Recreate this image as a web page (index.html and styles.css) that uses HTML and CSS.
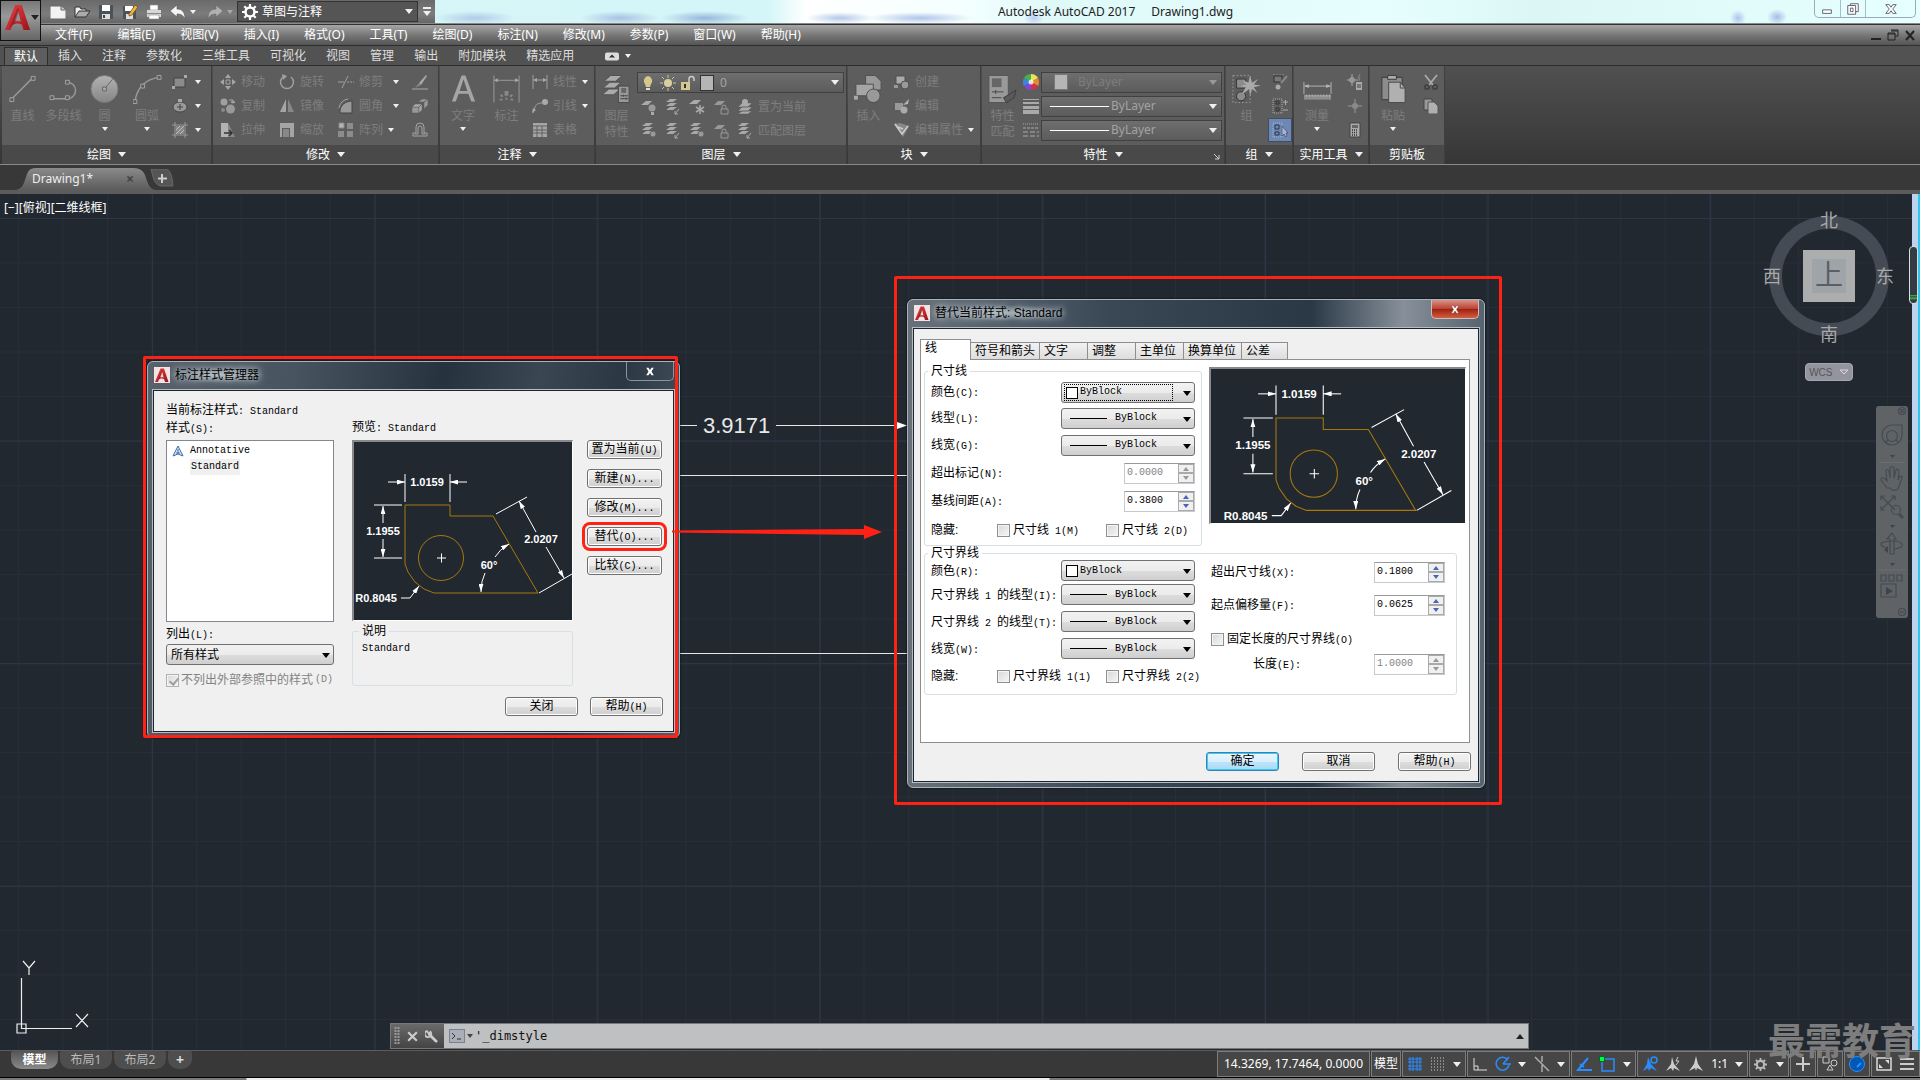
FILE: index.html
```html
<!DOCTYPE html>
<html lang="zh-CN">
<head>
<meta charset="utf-8">
<title>Autodesk AutoCAD 2017 - Drawing1.dwg</title>
<link rel="stylesheet" href="styles.css">
</head>
<body>
<svg class="defs" aria-hidden="true">
  <defs>
    <linearGradient id="red" x1="0" y1="0" x2="1" y2="1"><stop offset="0" stop-color="#e8434a"/><stop offset="1" stop-color="#9c1318"/></linearGradient>
    <linearGradient id="disc" x1="0" y1="0" x2="0" y2="1"><stop offset="0" stop-color="#b2b2b2"/><stop offset="1" stop-color="#868686"/></linearGradient>
    <linearGradient id="tabfill" x1="0" y1="0" x2="0" y2="1"><stop offset="0" stop-color="#8a8a8a"/><stop offset="1" stop-color="#5c5c5c"/></linearGradient>
    <pattern id="minor" width="44.5" height="44.5" patternUnits="userSpaceOnUse" x="18" y="24"><path d="M.5 0V44.5M0 .5H44.5" stroke="#272e39" fill="none"/></pattern>
    <pattern id="major" width="222.6" height="222.6" patternUnits="userSpaceOnUse" x="152" y="24"><path d="M.5 0V222.6M0 .5H222.6" stroke="#2e3646" fill="none"/></pattern>
    <marker id="tip" viewBox="0 0 10 6" refX="10" refY="3" markerWidth="8" markerHeight="5" orient="auto-start-reverse" markerUnits="userSpaceOnUse"><path d="M0 0L10 3L0 6z" fill="#fff"/></marker>
  </defs>
  <symbol id="i-a" viewBox="0 0 28 28"><path d="M11 0h7l9 27h-7l-2-6c-4-2-8-1-10 1l-2 5H0zM14 6l-4 12c3-1 5-1 7 0z" fill="url(#red)" fill-rule="evenodd"/><path d="M14 2L5 24l6-5 4-13" fill="#7d0f14" opacity=".45"/></symbol>
  <symbol id="i-new" viewBox="0 0 16 16"><path d="M0 2h11l5 4v9H0z" fill="#f2f2f2" stroke="#666"/><path d="M11 2v4h4" fill="#ccc" stroke="#666"/></symbol>
  <symbol id="i-open" viewBox="0 0 16 16"><path d="M1 13V3h5l1 2h5v2" fill="#eee" stroke="#333"/><path d="M1 13L5 7h11l-4 6z" fill="#aaa" stroke="#333"/></symbol>
  <symbol id="i-save" viewBox="0 0 16 16"><path d="M1 1h14v14H1z" fill="#4a525b"/><path d="M4 1h8v6H4z" fill="#fff"/><path d="M4 10h8v5H4z" fill="#ddd"/><path d="M5 11h2v3H5z" fill="#444"/></symbol>
  <symbol id="i-saveas" viewBox="0 0 16 16"><path d="M1 2h13v13H1z" fill="#4a525b"/><path d="M3 2h8v5H3z" fill="#fff"/><path d="M4 10h7v5H4z" fill="#ddd"/><path d="M7 10l6-9 3 2-6 8-3 1z" fill="#f2b53c" stroke="#6a4a14" stroke-width=".7"/></symbol>
  <symbol id="i-print" viewBox="0 0 16 16"><path d="M4 1h8v5H4z" fill="#fff" stroke="#888" stroke-width=".6"/><path d="M1 6h14v7H1z" fill="#d5d7da"/><path d="M1 9h14v1H1z" fill="#888"/><path d="M3 11h10v4H3z" fill="#fff" stroke="#888" stroke-width=".6"/></symbol>
  <symbol id="i-undo" viewBox="0 0 16 16"><path d="M0 7l7-6v4c5 0 8 3 8 10-2-4-4-5-8-5v3z" fill="#f4f4f4" stroke="#555" stroke-width=".6"/></symbol>
  <symbol id="i-gear" viewBox="0 0 16 16"><circle cx="8" cy="8" r="4.5" fill="none" stroke="currentColor" stroke-width="2.6"/><path d="M8 0v3M8 13v3M0 8h3M13 8h3M2.3 2.3l2 2M11.700 11.700l2 2M2.300 13.700l2-2M11.700 4.300l2-2" stroke="currentColor" stroke-width="2.200"/></symbol>
  <symbol id="i-line" viewBox="0 0 30 30"><path d="M4 25L25 4" stroke="#999" stroke-width="1.500"/><path d="M2 24h4v4H2zM24 2h4v4h-4z" fill="#5c5c5c" stroke="#a5a5a5"/></symbol>
  <symbol id="i-pline" viewBox="0 0 30 30"><path d="M2 25h17a8 8 0 0 0 0-17h-1" fill="none" stroke="#999" stroke-width="1.500"/><path d="M1 22h4v4H1zM17 22h4v4h-4zM17 6h4v4h-4z" fill="#5c5c5c" stroke="#a5a5a5"/></symbol>
  <symbol id="i-circle" viewBox="0 0 30 30"><circle cx="15" cy="15" r="14" fill="url(#disc)" stroke="#777"/><path d="M15 15L24 4" stroke="#666"/><path d="M13 13h4v4h-4z" fill="#aaa" stroke="#666"/></symbol>
  <symbol id="i-arc" viewBox="0 0 30 30"><path d="M2 28C4 14 13 4 28 3" fill="none" stroke="#999" stroke-width="1.500"/><path d="M0 26h4v4H0zM8 10h4v4H8zM25 1h4v4h-4z" fill="#5c5c5c" stroke="#a5a5a5"/></symbol>
  <symbol id="i-rect" viewBox="0 0 16 16"><path d="M2 4h11v9H2z" fill="#8b8b8b" stroke="#444"/><path d="M0 12h3v3H0zM12 1h3v3h-3z" fill="#aaa"/></symbol>
  <symbol id="i-ellipse" viewBox="0 0 16 16"><ellipse cx="8" cy="9" rx="7" ry="5" fill="#999" stroke="#484848"/><path d="M8 6v6M5 9h6" stroke="#444"/><path d="M6 1h4v3H6z" fill="#aaa"/></symbol>
  <symbol id="i-hatch" viewBox="0 0 16 16"><path d="M3 0v16M13 0v16M0 3h16M0 13h16" stroke="#999"/><path d="M4 4h8v8H4z" fill="#888"/><path d="M4 8l4-4M4 12l8-8M8 12l4-4" stroke="#bbb"/></symbol>
  <symbol id="i-move" viewBox="0 0 16 16"><path d="M8 0l3 4H5zM8 16l3-4H5zM0 8l4-3v6zM16 8l-4-3v6z" fill="#a5a5a5"/><path d="M6 6h4v4H6z" fill="none" stroke="#a5a5a5"/></symbol>
  <symbol id="i-rotate" viewBox="0 0 16 16"><path d="M4 3a6.500 6.500 0 1 0 8 0" fill="none" stroke="#a0a0a0" stroke-width="1.500"/><path d="M3 0l5 2-4 4z" fill="#a0a0a0"/></symbol>
  <symbol id="i-trim" viewBox="0 0 16 16"><path d="M0 8h6M9 8h2M12 8h2M15 8h1M4 14L10 2" stroke="#a0a0a0" fill="none"/></symbol>
  <symbol id="i-copy" viewBox="0 0 16 16"><circle cx="4" cy="4" r="3.500" fill="#a0a0a0"/><circle cx="10.500" cy="11" r="4.500" fill="#999"/><path d="M9 2h4v3M13 5l-2-1h4z" stroke="#aaa" fill="none"/><circle cx="3" cy="12" r="2" fill="#888"/></symbol>
  <symbol id="i-mirror" viewBox="0 0 16 16"><path d="M7 1v13H1z" fill="#a5a5a5"/><path d="M9 1v13h6z" fill="#888"/></symbol>
  <symbol id="i-fillet" viewBox="0 0 16 16"><path d="M2 15V13C2 7 8 3 14 3v12z" fill="#999" stroke="#444"/><path d="M1 10C2 5 5 2 10 1" stroke="#aaa" fill="none"/></symbol>
  <symbol id="i-stretch" viewBox="0 0 16 16"><path d="M1 1h7v14H1z" fill="#b2b2b2"/><path d="M8 1l7 14H8z" fill="#888"/><path d="M4 11h8M9 8l3 3-3 3" stroke="#333" stroke-width="1.500" fill="none"/></symbol>
  <symbol id="i-scale" viewBox="0 0 16 16"><path d="M1 1h14v14H1z" fill="#a5a5a5"/><path d="M3 6h8v9H3z" fill="#5c5c5c"/><path d="M4 7h6v8H4z" fill="#888"/></symbol>
  <symbol id="i-array" viewBox="0 0 16 16"><path d="M1 1h5v5H1z" fill="#b5b5b5" stroke="#888"/><path d="M9 1h6v6H9zM0 9h6v6H0zM9 9h6v6H9z" fill="#8c8c8c"/></symbol>
  <symbol id="i-erase" viewBox="0 0 16 16"><path d="M14 1L7 9l2 2 6-9z" fill="#a8a8a8"/><path d="M7 9l-4 5 6-3z" fill="#888"/><path d="M0 15h16" stroke="#aaa"/></symbol>
  <symbol id="i-explode" viewBox="0 0 16 16"><path d="M0 9h7v6H0z" fill="#999" stroke="#555" stroke-width=".5"/><path d="M0 9l3-3h7L7 9zM7 9l3-3v6l-3 3z" fill="#aaa" stroke="#555" stroke-width=".5"/><path d="M6 4l4-3h6l-4 3zM12 4l4-3v6l-4 4z" fill="#999" stroke="#555" stroke-width=".5"/></symbol>
  <symbol id="i-offset" viewBox="0 0 16 16"><path d="M1 14h14v-3h-3V5a4 4 0 0 0-8 0v6H1z" fill="none" stroke="#a5a5a5"/><path d="M3 12h3V6a2 2 0 0 1 4 0v6h3" fill="none" stroke="#a5a5a5"/></symbol>
  <symbol id="i-text" viewBox="0 0 30 30"><path d="M13 1h4l10 27h-4l-3-8H10l-3 8H3zM15 5l-4 12h8z" fill="#a5a5a5" fill-rule="evenodd"/></symbol>
  <symbol id="i-dim" viewBox="0 0 30 30"><path d="M2 1v28M28 1v28M3 6h24" stroke="#999"/><path d="M2 6l4-2v4zM28 6l-4-2v4z" fill="#aaa"/><path d="M14 18h2v3h-2zM9 21l2 2M21 21l-2 2M8 26h3M19 26h3M14 25h2" stroke="#888" stroke-width="2"/></symbol>
  <symbol id="i-linear" viewBox="0 0 16 16"><path d="M1 1v14M15 1v14M2 6h12" stroke="#a0a0a0"/><path d="M1 6l4-2v4zM15 6l-4-2v4z" fill="#aaa"/></symbol>
  <symbol id="i-leader" viewBox="0 0 16 16"><path d="M1 15C3 8 4 5 10 5" stroke="#a0a0a0" fill="none"/><circle cx="13" cy="4" r="3" fill="#aaa"/><path d="M0 15l1-5 3 2z" fill="#aaa"/></symbol>
  <symbol id="i-table" viewBox="0 0 16 16"><path d="M1 1h14v14H1z" fill="#a5a5a5"/><path d="M1 4h14M1 8h14M1 11h14M5 4v11M10 4v11" stroke="#606060"/></symbol>
  <symbol id="i-layerprops" viewBox="0 0 30 30"><path d="M9 1h12l-7 6H2zM8 8h12l-7 6H1zM7 15h12l-7 6H0z" fill="#aaa" stroke="#505050"/><path d="M17 12h11v17H17z" fill="#999" stroke="#4a4a4a"/><path d="M20 14h5v5h-5z" fill="#666"/><path d="M19 22h8M19 25h8M22 21v2M25 24v2" stroke="#444"/></symbol>
  <symbol id="i-bulb" viewBox="0 0 16 16"><path d="M8 1a5 5 0 0 1 3 8l-1 3H6L5 9a5 5 0 0 1 3-8z" fill="#d6c78b"/><path d="M6 13h4v2H6z" fill="#ddd"/></symbol>
  <symbol id="i-sun" viewBox="0 0 16 16"><circle cx="8" cy="8" r="4" fill="#d8cf9c"/><path d="M8 0v3M8 13v3M0 8h3M13 8h3M2 2l2 2M12 12l2 2M2 14l2-2M12 4l2-2" stroke="#c9c4ae"/></symbol>
  <symbol id="i-lock" viewBox="0 0 16 16"><path d="M1 7h9v8H1z" fill="#d4c791"/><path d="M9 7V4a2.500 2.500 0 0 1 5 0v2" fill="none" stroke="#ccc" stroke-width="1.500"/><path d="M5 9v4" stroke="#333" stroke-width="2"/></symbol>
  <symbol id="i-lay1" viewBox="0 0 16 16"><path d="M5 2h6L7 6H0z" fill="#aaa"/><circle cx="11" cy="9" r="3.500" fill="#999"/><path d="M10 13h3v3h-3z" fill="#aaa"/></symbol>
  <symbol id="i-lay2" viewBox="0 0 16 16"><path d="M5 0h7L8 3H1zM5 4h7L8 7H1zM5 8h7l-4 3H1z" fill="#a8a8a8"/><path d="M14 10l-4 5M10 12v3h3" stroke="#aaa" fill="none"/></symbol>
  <symbol id="i-lay3" viewBox="0 0 16 16"><path d="M5 1h7L8 5H0z" fill="#aaa"/><path d="M11 6v9M7 8l8 5M15 8l-8 5" stroke="#aaa" stroke-width="1.500"/></symbol>
  <symbol id="i-lay4" viewBox="0 0 16 16"><path d="M5 2h7L8 6H1z" fill="#999"/><path d="M8 10h7v5H8z" fill="none" stroke="#999"/><path d="M9 10V8a2 2 0 0 1 4 0v2" fill="none" stroke="#999"/></symbol>
  <symbol id="i-lay5" viewBox="0 0 16 16"><path d="M5 4h10l-4 4H1zM5 8h10l-4 4H1zM5 12h10l-4 3H1z" fill="#aaa" stroke="#555" stroke-width=".5"/><circle cx="8" cy="3" r="3" fill="#aaa"/></symbol>
  <symbol id="i-lay6" viewBox="0 0 16 16"><path d="M5 0h7L8 3H1zM5 4h7L8 7H1zM5 8h7l-4 3H1z" fill="#a8a8a8"/><circle cx="12" cy="11" r="3" fill="#999" stroke="#666"/></symbol>
  <symbol id="i-insert" viewBox="0 0 30 30"><path d="M12 1h10l6 6v9H12z" fill="#999" stroke="#4f4f4f"/><path d="M2 10h18v12H2z" fill="#a5a5a5" stroke="#4f4f4f"/><circle cx="20" cy="22" r="7" fill="#999" stroke="#4f4f4f"/><path d="M0 22h4v4H0z" fill="#aaa"/></symbol>
  <symbol id="i-block" viewBox="0 0 16 16"><path d="M2 2h9v8H2z" fill="#aaa" stroke="#505050"/><circle cx="11" cy="11" r="4" fill="#999" stroke="#505050"/><path d="M0 11h4v3H0z" fill="#999"/></symbol>
  <symbol id="i-bedit" viewBox="0 0 16 16"><path d="M1 5h8v7H1z" fill="#999"/><circle cx="10" cy="12" r="3.500" fill="#aaa"/><path d="M9 7l6-6-1 5z" fill="#b5b5b5"/></symbol>
  <symbol id="i-attr" viewBox="0 0 16 16"><path d="M0 2l6-1 9 3-6 11z" fill="#888"/><path d="M1 2l7 10 6-8M4 5l5 2" stroke="#ccc" fill="none" stroke-width="1.500"/></symbol>
  <symbol id="i-match" viewBox="0 0 30 30"><path d="M1 1h20v28H1z" fill="#999" stroke="#555"/><path d="M4 4h10v9H4z" fill="#666"/><path d="M4 18h12M4 24h10M8 16v4" stroke="#444"/><path d="M29 16l-6 4-7 4 3 5 8-5z" fill="#5a5a5a" stroke="#3d3d3d"/></symbol>
  <symbol id="i-wheel" viewBox="0 0 16 16"><path d="M8 8L8 0A8 8 0 0 1 15 4z" fill="#e9e35a"/><path d="M8 8L15 4A8 8 0 0 1 15 12z" fill="#e8872d"/><path d="M8 8L15 12A8 8 0 0 1 8 16z" fill="#d4304a"/><path d="M8 8L8 16A8 8 0 0 1 1 12z" fill="#7d4ad0"/><path d="M8 8L1 12A8 8 0 0 1 1 4z" fill="#3b86d8"/><path d="M8 8L1 4A8 8 0 0 1 8 0z" fill="#49b04e"/><circle cx="8" cy="8" r="2.500" fill="#fff" opacity=".8"/></symbol>
  <symbol id="i-lweight" viewBox="0 0 16 16"><path d="M0 1.500h16" stroke="#aaa"/><path d="M0 5h16" stroke="#aaa" stroke-width="2"/><path d="M0 9.500h16" stroke="#aaa" stroke-width="3"/><path d="M0 14h16" stroke="#aaa" stroke-width="4"/></symbol>
  <symbol id="i-ltype" viewBox="0 0 16 16"><path d="M0 2h16" stroke="#aaa" stroke-dasharray="1 1"/><path d="M0 6h16" stroke="#aaa" stroke-dasharray="3 1"/><path d="M0 10h16M0 14h16" stroke="#aaa" stroke-dasharray="5 2"/></symbol>
  <symbol id="i-group" viewBox="0 0 32 32"><path d="M1 1h19v30H1z" fill="none" stroke="#999" stroke-dasharray="2 2"/><path d="M5 5h10v10H5z" fill="#8c8c8c" stroke="#333"/><circle cx="10" cy="24" r="5" fill="#8c8c8c" stroke="#333"/><path d="M20 1l2 8 7-4-5 6 8 1-8 2 4 6-6-4-2 8-1-8-8 6 4-8-6-1 6-2-3-5 6 3z" fill="#aaa"/></symbol>
  <symbol id="i-ungroup" viewBox="0 0 16 16"><path d="M2 2h8v6H2z" fill="#777" stroke="#333"/><circle cx="6" cy="13" r="2.500" fill="#aaa"/><path d="M1 0h12" stroke="#999" stroke-dasharray="2 1"/><path d="M9 9l6-7" stroke="#888" stroke-width="2"/></symbol>
  <symbol id="i-gedit" viewBox="0 0 16 16"><path d="M1 1h9v14H1z" fill="none" stroke="#aaa" stroke-dasharray="1 1"/><path d="M4 3h3v3H4zM4 10h3v3H4z" fill="none" stroke="#333"/><path d="M11 4h5M13.500 2v5M11 12h5" stroke="#aaa"/></symbol>
  <symbol id="i-gsel" viewBox="0 0 16 16"><path d="M1 1h9v14H1z" fill="none" stroke="#a8b6cf" stroke-dasharray="1 1"/><path d="M3 3h4v4H3zM3 10h4v3H3z" fill="none" stroke="#2b3650"/><path d="M10 4v10l2-2 2 3 1-1-1-3h2z" fill="#a8b6cf" stroke="#34415e" stroke-width=".6"/></symbol>
  <symbol id="i-measure" viewBox="0 0 30 30"><path d="M1 8v12M29 8v12M2 12h26" stroke="#b5b5b5"/><path d="M1 12l5-2v4zM29 12l-5-2v4z" fill="#b5b5b5"/><path d="M1 21h28v5H1z" fill="#8d8d8d"/><path d="M3 22h25" stroke="#bbb" stroke-dasharray="1 2" stroke-width="2"/></symbol>
  <symbol id="i-quick" viewBox="0 0 16 16"><path d="M5 0v12M0 6h11M3 4h4v4H3z" stroke="#aaa" fill="none"/><path d="M9 8h6v8H9z" fill="#aaa"/><path d="M10 11h4M10 13h4" stroke="#444"/><path d="M13 0l-2 4h2l-1 3" stroke="#888" fill="none"/></symbol>
  <symbol id="i-point" viewBox="0 0 16 16"><path d="M8 1v14M1 8h14M6 6h4v4H6z" stroke="#999" fill="none"/></symbol>
  <symbol id="i-calc" viewBox="0 0 16 16"><path d="M3 1h10v14H3z" fill="#aaa" stroke="#444"/><path d="M5 3h6v3H5z" fill="#666"/><path d="M5 8h6M5 10.500h6M5 13h6" stroke="#333" stroke-dasharray="1 1" stroke-width="1.500"/></symbol>
  <symbol id="i-paste" viewBox="0 0 30 30"><path d="M3 3h21v23H3z" fill="#8c8c8c" stroke="#3a3a3a"/><path d="M9 1h9v4H9z" fill="#aaa" stroke="#3a3a3a"/><path d="M10 8h12l5 6v15H10z" fill="#b0b0b0" stroke="#4a4a4a"/><path d="M22 8v6h5" fill="none" stroke="#4a4a4a"/></symbol>
  <symbol id="i-cut" viewBox="0 0 16 16"><path d="M2 1l8 10M14 1L6 11" stroke="#aaa" stroke-width="1.800"/><circle cx="4" cy="13" r="2.200" fill="none" stroke="#3c3c3c" stroke-width="1.300"/><circle cx="12" cy="13" r="2.200" fill="none" stroke="#3c3c3c" stroke-width="1.300"/></symbol>
  <symbol id="i-copyclip" viewBox="0 0 16 16"><path d="M1 1h8v11H1z" fill="#999" stroke="#444"/><path d="M5 4h6l4 4v8H5z" fill="#b0b0b0" stroke="#555"/></symbol>
</svg>

<header class="titlebar">
  <div class="quick">
    <button class="ico" title="新建"><svg><use href="#i-new"/></svg></button>
    <button class="ico" title="打开"><svg><use href="#i-open"/></svg></button>
    <button class="ico" title="保存"><svg><use href="#i-save"/></svg></button>
    <button class="ico" title="另存为"><svg><use href="#i-saveas"/></svg></button>
    <button class="ico" title="打印"><svg><use href="#i-print"/></svg></button>
    <button class="ico" title="放弃"><svg><use href="#i-undo"/></svg></button>
    <i class="caret tiny"></i>
    <button class="ico redo" title="重做"><svg><use href="#i-undo"/></svg></button>
    <i class="caret tiny dim"></i>
    <div class="workspace">
      <svg><use href="#i-gear"/></svg>
      <select aria-label="工作空间"><option>草图与注释</option></select>
      <i class="caret"></i>
    </div>
    <button class="more" title="自定义"><i class="caret"></i></button>
  </div>
  <div class="caption"><span>Autodesk AutoCAD 2017</span><span>Drawing1.dwg</span></div>
  <div class="winctl">
    <button title="最小化"><svg viewBox="0 0 16 16"><path d="M3 9h10v4H3z" fill="#fff" stroke="#556"/></svg></button>
    <button title="还原"><svg viewBox="0 0 16 16"><path d="M5 2h9v9H5z" fill="#fff" stroke="#556"/><path d="M2 4h9v10H2z" fill="#fff" stroke="#556"/><path d="M5 7h3v4H5z" fill="#fff" stroke="#556"/></svg></button>
    <button title="关闭"><svg viewBox="0 0 16 16"><path d="M2 3h4l2 3 2-3h4l-4 5 4 5h-4l-2-3-2 3H2l4-5z" fill="#fff" stroke="#556"/></svg></button>
  </div>
</header>
<button class="appmenu" title="应用程序菜单"><svg class="big"><use href="#i-a"/></svg><i class="caret"></i></button>

<nav class="menubar">
  <a href="#">文件(F)</a><a href="#">编辑(E)</a><a href="#">视图(V)</a><a href="#">插入(I)</a><a href="#">格式(O)</a><a href="#">工具(T)</a><a href="#">绘图(D)</a><a href="#">标注(N)</a><a href="#">修改(M)</a><a href="#">参数(P)</a><a href="#">窗口(W)</a><a href="#">帮助(H)</a>
  <div class="docctl">
    <button title="最小化"><svg viewBox="0 0 12 12"><path d="M1 9h10v2H1z" fill="#222"/></svg></button>
    <button title="还原"><svg viewBox="0 0 12 12"><path d="M4 1h7v6H8M1 4h7v7H1zM1 5h7M4 2h7" fill="none" stroke="#222"/></svg></button>
    <button title="关闭"><svg viewBox="0 0 12 12"><path d="M2 2l8 9M10 2l-8 9" stroke="#222" stroke-width="2"/></svg></button>
  </div>
</nav>

<nav class="tabs">
  <a class="on" href="#">默认</a><a href="#">插入</a><a href="#">注释</a><a href="#">参数化</a><a href="#">三维工具</a><a href="#">可视化</a><a href="#">视图</a><a href="#">管理</a><a href="#">输出</a><a href="#">附加模块</a><a href="#">精选应用</a>
  <button class="pill" title="最小化功能区"><svg viewBox="0 0 14 8"><rect width="14" height="8" rx="2" fill="#ddd"/><path d="M4 5h6L7 2z" fill="#333"/></svg></button><i class="caret tiny"></i>
</nav>

<section class="ribbon">
  <div class="panel p-draw">
    <div class="body">
      <button class="bigbtn w41"><svg><use href="#i-line"/></svg>直线</button>
      <button class="bigbtn w41"><svg><use href="#i-pline"/></svg>多段线</button>
      <button class="bigbtn w41"><svg><use href="#i-circle"/></svg>圆<i class="caret tiny"></i></button>
      <button class="bigbtn w44"><svg><use href="#i-arc"/></svg>圆弧<i class="caret tiny"></i></button>
      <div class="col">
        <button class="row"><svg><use href="#i-rect"/></svg><i class="caret tiny"></i></button>
        <button class="row"><svg><use href="#i-ellipse"/></svg><i class="caret tiny"></i></button>
        <button class="row"><svg><use href="#i-hatch"/></svg><i class="caret tiny"></i></button>
      </div>
    </div>
    <h2>绘图<i class="caret"></i></h2>
  </div>
  <div class="panel p-modify">
    <div class="body">
      <div class="col w60">
        <button class="row"><svg><use href="#i-move"/></svg>移动</button>
        <button class="row"><svg><use href="#i-copy"/></svg>复制</button>
        <button class="row"><svg><use href="#i-stretch"/></svg>拉伸</button>
      </div>
      <div class="col w60">
        <button class="row"><svg><use href="#i-rotate"/></svg>旋转</button>
        <button class="row"><svg><use href="#i-mirror"/></svg>镜像</button>
        <button class="row"><svg><use href="#i-scale"/></svg>缩放</button>
      </div>
      <div class="col w73">
        <button class="row"><svg><use href="#i-trim"/></svg>修剪<i class="caret tiny far"></i></button>
        <button class="row"><svg><use href="#i-fillet"/></svg>圆角<i class="caret tiny far"></i></button>
        <button class="row"><svg><use href="#i-array"/></svg>阵列<i class="caret tiny"></i></button>
      </div>
      <div class="col">
        <button class="row"><svg><use href="#i-erase"/></svg></button>
        <button class="row"><svg><use href="#i-explode"/></svg></button>
        <button class="row"><svg><use href="#i-offset"/></svg></button>
      </div>
    </div>
    <h2>修改<i class="caret"></i></h2>
  </div>
  <div class="panel p-anno">
    <div class="body">
      <button class="bigbtn w46"><svg><use href="#i-text"/></svg>文字<i class="caret tiny"></i></button>
      <button class="bigbtn w41"><svg><use href="#i-dim"/></svg>标注</button>
      <div class="col tight">
        <button class="row"><svg><use href="#i-linear"/></svg>线性<i class="caret tiny"></i></button>
        <button class="row"><svg><use href="#i-leader"/></svg>引线<i class="caret tiny"></i></button>
        <button class="row"><svg><use href="#i-table"/></svg>表格</button>
      </div>
    </div>
    <h2>注释<i class="caret"></i></h2>
  </div>
  <div class="panel p-layer">
    <div class="body">
      <button class="bigbtn w41"><svg><use href="#i-layerprops"/></svg>图层<br>特性</button>
      <div class="stack">
        <div class="combo layer">
          <svg><use href="#i-bulb"/></svg><svg><use href="#i-sun"/></svg><svg><use href="#i-lock"/></svg><span class="swatch"></span>
          <select aria-label="图层"><option>0</option></select><i class="caret"></i>
        </div>
        <div class="icons">
          <svg><use href="#i-lay1"/></svg><svg><use href="#i-lay2"/></svg><svg><use href="#i-lay3"/></svg><svg><use href="#i-lay4"/></svg>
          <button class="row"><svg><use href="#i-lay5"/></svg>置为当前</button>
        </div>
        <div class="icons">
          <svg><use href="#i-lay6"/></svg><svg><use href="#i-lay2"/></svg><svg><use href="#i-lay6"/></svg><svg><use href="#i-lay4"/></svg>
          <button class="row"><svg><use href="#i-lay2"/></svg>匹配图层</button>
        </div>
      </div>
    </div>
    <h2>图层<i class="caret"></i></h2>
  </div>
  <div class="panel p-block">
    <div class="body">
      <button class="bigbtn w41"><svg><use href="#i-insert"/></svg>插入</button>
      <div class="col tight">
        <button class="row"><svg><use href="#i-block"/></svg>创建</button>
        <button class="row"><svg><use href="#i-bedit"/></svg>编辑</button>
        <button class="row"><svg><use href="#i-attr"/></svg>编辑属性<i class="caret tiny"></i></button>
      </div>
    </div>
    <h2>块<i class="caret"></i></h2>
  </div>
  <div class="panel p-props">
    <div class="body">
      <button class="bigbtn w41"><svg><use href="#i-match"/></svg>特性<br>匹配</button>
      <div class="stack">
        <div class="prop"><svg><use href="#i-wheel"/></svg><div class="combo faint"><span class="swatch"></span><select aria-label="对象颜色"><option>ByLayer</option></select><i class="caret"></i></div></div>
        <div class="prop"><svg><use href="#i-lweight"/></svg><div class="combo"><span class="rule"></span><select aria-label="线宽"><option>ByLayer</option></select><i class="caret"></i></div></div>
        <div class="prop"><svg><use href="#i-ltype"/></svg><div class="combo"><span class="rule"></span><select aria-label="线型"><option>ByLayer</option></select><i class="caret"></i></div></div>
      </div>
    </div>
    <h2>特性<i class="caret"></i></h2>
    <svg class="launch" viewBox="0 0 8 8"><path d="M1 1l5 5M6 2v4H2" stroke="#ccc" fill="none"/></svg>
  </div>
  <div class="panel p-group">
    <div class="body">
      <button class="bigbtn w41"><svg><use href="#i-group"/></svg>组</button>
      <div class="col tight">
        <button class="row"><svg><use href="#i-ungroup"/></svg></button>
        <button class="row"><svg><use href="#i-gedit"/></svg></button>
        <button class="row lit"><svg><use href="#i-gsel"/></svg></button>
      </div>
    </div>
    <h2>组<i class="caret"></i></h2>
  </div>
  <div class="panel p-util">
    <div class="body">
      <button class="bigbtn w46"><svg><use href="#i-measure"/></svg>测量<i class="caret tiny"></i></button>
      <div class="col">
        <button class="row"><svg><use href="#i-quick"/></svg></button>
        <button class="row"><svg><use href="#i-point"/></svg></button>
        <button class="row"><svg><use href="#i-calc"/></svg></button>
      </div>
    </div>
    <h2>实用工具<i class="caret"></i></h2>
  </div>
  <div class="panel p-util">
    <div class="body">
      <button class="bigbtn w46"><svg><use href="#i-paste"/></svg>粘贴<i class="caret tiny"></i></button>
      <div class="col">
        <button class="row"><svg><use href="#i-cut"/></svg></button>
        <button class="row"><svg><use href="#i-copyclip"/></svg></button>
      </div>
    </div>
    <h2>剪贴板</h2>
  </div>
</section>

<nav class="files">
  <a class="file" href="#"><svg class="shape" viewBox="0 0 140 22" preserveAspectRatio="none"><path d="M0 22C8 20 8 14 11 6Q13 0 19 0H118Q126 0 129 7C132 16 133 21 140 22z" fill="url(#tabfill)"/></svg><span>Drawing1*</span><b>×</b></a>
  <button class="add" title="新图形"><svg viewBox="0 0 24 18"><path d="M1 0H16Q22 1 23 17H11Q5 16 3 8z" fill="#555" stroke="#666"/><path d="M12 5v9M8 9.500h9" stroke="#ccc" stroke-width="2"/></svg></button>
</nav>

<main class="work">
  <div class="canvas">
    <svg class="grid"><rect width="100%" height="100%" fill="url(#minor)"/><rect width="100%" height="100%" fill="url(#major)"/></svg>
    <div class="view">[−][俯视][二维线框]</div>
    <svg class="dims" width="920" height="480">
      <g stroke="#e6e6e6" fill="none"><path d="M678 231.500H697M776 231.500H900M678 281.500H910M678 459.500H910"/></g>
      <path d="M897 228v7l10-3.500z" fill="#fff"/>
      <text x="703" y="239" font-size="22" fill="#e8e8e8">3.9171</text>
    </svg>
    <svg class="ucs" width="90" height="90" viewBox="0 0 90 90"><path d="M9.500 24V74.500H60M5 70h9v9H5zM11 7l6 7 6-7M17 14v7M64 60l12 13M76 60L64 73" fill="none" stroke="#eee" stroke-width="1.200"/></svg>

    <div class="compass">
      <span class="n">北</span><span class="w">西</span><button class="top">上</button><span class="e">东</span><span class="s">南</span>
    </div>
    <button class="wcs">WCS<svg viewBox="0 0 10 6"><path d="M1 1h8L5 5z" fill="none" stroke="#d8d8e0"/></svg></button>
    <svg class="navbar" viewBox="0 0 32 212">
      <rect width="32" height="212" rx="3" fill="#5f6366"/>
      <g fill="none" stroke="#454b54" stroke-width="1.200">
        <circle cx="26" cy="5" r="3.500"/><path d="M24 3l4 4M28 3l-4 4"/>
        <path d="M16 19h10v11a10 10 0 1 1-10-11z"/><circle cx="16" cy="30" r="5.500"/><path d="M9 37l3-3M23 37l-3-3"/>
        <path d="M3 56.500h26M3 164h26" stroke="#6a6e72"/>
        <path d="M11 82L5 74q0-3 3-2l3 3-1-10q1-3 3 0l1 7V62q2-3 4 0v10l2-8q2-2 3 1l-1 9 2-4q3 0 2 2l-4 11q-5 3-8-1z"/>
        <path d="M5 90l14 14M19 90L5 104M5 94v-4h4M15 90h4v4M5 100v4h4"/><circle cx="20" cy="104" r="4.500"/><path d="M23 108l4 4" stroke-width="3"/>
        <path d="M14 148v-15h-3l5-6 4 6h-2v15z"/><path d="M10 142c-12-5 0-7 6-7 13 0 14 7 2 8"/>
        <path d="M5 169h5v6H5zM13 169h5v6h-5zM21 169h5v6h-5zM5 178h15v13H5z"/><circle cx="26" cy="206" r="3.500"/><path d="M24 206h4"/>
      </g>
      <path d="M14 49h5l-2.500 3zM14 119h5l-2.500 3zM14 157h5l-2.500 3zM10 181l7 4-7 4zM8 144l4-4v7z" fill="#3f444c"/>
    </svg>

    <div class="mark mark-a"></div>
    <div class="mark mark-b"></div>

    <section class="dialog manager" aria-label="标注样式管理器">
      <div class="bar"><span class="appicon"><svg><use href="#i-a"/></svg></span><span class="glow">标注样式管理器</span><button class="close" title="关闭"><svg viewBox="0 0 12 12"><path d="M1 1h3l2 3 2-3h3L8 6l3 5H8L6 8l-2 3H1l3-5z" fill="#fff"/></svg></button></div>
      <form class="client">
        <div class="mgr">
          <div class="left">
            <p class="cur">当前标注样式<span class="en">: Standard</span></p>
            <p class="ln">样式<span class="en">(S):</span></p>
            <ul class="styles">
              <li><svg viewBox="0 0 12 12"><path d="M6 1L1 11l5-2 5 2zM6 4v5M4 8h4" fill="#dce9f7" stroke="#3b6ea8"/></svg><span class="en">Annotative</span></li>
              <li><svg></svg><span class="en sel">Standard</span></li>
            </ul>
            <label class="ln list" for="list">列出<span class="en">(L):</span></label>
            <div class="dd"><select id="list"><option>所有样式</option></select></div>
            <label class="ck off"><input type="checkbox" checked disabled>不列出外部参照中的样式<span class="en">(D)</span></label>
          </div>
          <div class="mid">
            <p class="ln">预览<span class="en">: Standard</span></p>
            <svg class="preview pv-a" viewBox="0 0 218 178">
              <g transform="translate(51 63)"><g id="part">
                <path d="M0 0H45V11H88L133 88H29L19 84L10 77L3 67L0 59Z" fill="none" stroke="#a8790a"/><circle cx="36" cy="53" r="22.500" fill="none" stroke="#a8790a"/>
                <g fill="none" stroke="#fff"><path d="M0-31V-3M45-31V-3M-31 0H-3M-31 53H-3M91 9L122-8M134 88L167 69M32 53h9M36.500 48.500v9"/>
                <path d="M-17-23H0" marker-end="url(#tip)"/><path d="M62-23H45" marker-end="url(#tip)"/>
                <path d="M-22 18V1" marker-end="url(#tip)"/><path d="M-22 34V52" marker-end="url(#tip)"/>
                <path d="M131 27L114-4" marker-end="url(#tip)"/><path d="M141 42L159 73" marker-end="url(#tip)"/>
                <path d="M90 52Q94 45 104 39" marker-end="url(#tip)"/><path d="M80 68Q76 76 76 87" marker-end="url(#tip)"/>
                <path d="M-4 93H5L14 81" marker-end="url(#tip)"/></g>
                <g class="dimtext"><text x="22" y="-19">1.0159</text><text x="-22" y="30">1.1955</text><text x="136" y="38">2.0207</text><text x="84" y="64">60°</text><text x="-29" y="97">R0.8045</text></g>
              </g></g>
            </svg>
            <fieldset class="desc"><legend>说明</legend><span class="en">Standard</span></fieldset>
          </div>
          <div class="btns">
            <button type="button">置为当前<span class="en">(U)</span></button>
            <button type="button">新建<span class="en">(N)...</span></button>
            <button type="button">修改<span class="en">(M)...</span></button>
            <button type="button" class="ring">替代<span class="en">(O)...</span></button>
            <button type="button">比较<span class="en">(C)...</span></button>
          </div>
        </div>
        <div class="foot"><button type="button">关闭</button><button type="button">帮助<span class="en">(H)</span></button></div>
      </form>
    </section>

    <svg class="arrow" width="220" height="20" viewBox="0 0 220 20"><path d="M0 8.500L192 7V3L210 10L192 17V13L0 10.500z" fill="#ff2214"/></svg>

    <section class="dialog override" aria-label="替代当前样式">
      <div class="bar"><span class="appicon"><svg><use href="#i-a"/></svg></span><span class="glow">替代当前样式: Standard</span><button class="close hot" title="关闭"><svg viewBox="0 0 12 12"><path d="M1 1h3l2 3 2-3h3L8 6l3 5H8L6 8l-2 3H1l3-5z" fill="#fff" stroke="#533" stroke-width=".5"/></svg></button></div>
      <form class="client">
        <div class="ptabs" role="tablist"><button type="button" role="tab" class="on t51">线</button><button type="button" role="tab" class="t69">符号和箭头</button><button type="button" role="tab" class="t48">文字</button><button type="button" role="tab" class="t48">调整</button><button type="button" role="tab" class="t48">主单位</button><button type="button" role="tab" class="t58">换算单位</button><button type="button" role="tab" class="t46">公差</button></div>
        <div class="page">
          <div class="upper">
            <fieldset class="grp dimline"><legend>尺寸线</legend>
              <div class="rows r1">
                <label for="c1">颜色<span class="en">(C):</span></label><div class="dd color focus"><select id="c1" class="en"><option>ByBlock</option></select></div>
                <label for="l1">线型<span class="en">(L):</span></label><div class="dd line"><select id="l1" class="en"><option>ByBlock</option></select></div>
                <label for="w1">线宽<span class="en">(G):</span></label><div class="dd line"><select id="w1" class="en"><option>ByBlock</option></select></div>
                <label for="s1">超出标记<span class="en">(N):</span></label><div class="spin off"><input id="s1" class="en" value="0.0000" disabled><div><button type="button" disabled title="增加"></button><button type="button" disabled title="减少"></button></div></div>
                <label for="s2">基线间距<span class="en">(A):</span></label><div class="spin"><input id="s2" class="en" value="0.3800"><div><button type="button" title="增加"></button><button type="button" title="减少"></button></div></div>
                <div class="hide"><span>隐藏:</span><label class="ck"><input type="checkbox"><span>尺寸线<span class="en"> 1(M)</span></span></label><label class="ck"><input type="checkbox"><span>尺寸线<span class="en"> 2(D)</span></span></label></div>
              </div>
            </fieldset>
            <svg class="preview pv-b" viewBox="0 0 254 154"><use href="#part" transform="translate(65 49) scale(1.050)"/></svg>
          </div>
          <fieldset class="grp ext"><legend>尺寸界线</legend>
            <div class="two">
              <div class="rows r2">
                <label for="c2">颜色<span class="en">(R):</span></label><div class="dd color"><select id="c2" class="en"><option>ByBlock</option></select></div>
                <label for="l2">尺寸界线<span class="en"> 1 </span>的线型<span class="en">(I):</span></label><div class="dd line"><select id="l2" class="en"><option>ByBlock</option></select></div>
                <label for="l3">尺寸界线<span class="en"> 2 </span>的线型<span class="en">(T):</span></label><div class="dd line"><select id="l3" class="en"><option>ByBlock</option></select></div>
                <label for="w2">线宽<span class="en">(W):</span></label><div class="dd line"><select id="w2" class="en"><option>ByBlock</option></select></div>
                <div class="hide"><span>隐藏:</span><label class="ck"><input type="checkbox"><span>尺寸界线<span class="en"> 1(1)</span></span></label><label class="ck"><input type="checkbox"><span>尺寸界线<span class="en"> 2(2)</span></span></label></div>
              </div>
              <div class="rows r3">
                <label for="s3">超出尺寸线<span class="en">(X):</span></label><div class="spin"><input id="s3" class="en" value="0.1800"><div><button type="button" title="增加"></button><button type="button" title="减少"></button></div></div>
                <label for="s4">起点偏移量<span class="en">(F):</span></label><div class="spin"><input id="s4" class="en" value="0.0625"><div><button type="button" title="增加"></button><button type="button" title="减少"></button></div></div>
                <label class="ck wide"><input type="checkbox"><span>固定长度的尺寸界线<span class="en">(O)</span></span></label>
                <label class="indent" for="s5">长度<span class="en">(E):</span></label><div class="spin off"><input id="s5" class="en" value="1.0000" disabled><div><button type="button" disabled title="增加"></button><button type="button" disabled title="减少"></button></div></div>
              </div>
            </div>
          </fieldset>
        </div>
        <div class="foot"><button type="button" class="ok">确定</button><button type="button">取消</button><button type="button">帮助<span class="en">(H)</span></button></div>
      </form>
    </section>

    <div class="cmd">
      <div class="handle"><svg class="grip" viewBox="0 0 6 18"><path d="M1.500 0v18M4.500 0v18" stroke="#999" stroke-width="2" stroke-dasharray="2 1"/></svg>
        <button title="关闭"><svg viewBox="0 0 12 12"><path d="M2 2l8 8M10 2l-8 8" stroke="#ccc" stroke-width="2"/></svg></button>
        <button title="自定义"><svg viewBox="0 0 14 14"><path d="M5 5l7 7" stroke="#ccc" stroke-width="3" stroke-linecap="round"/><path d="M2 1a3.500 3.500 0 1 0 4 1L4 4z" fill="none" stroke="#ccc" stroke-width="1.800"/></svg></button></div>
      <svg class="prompt" viewBox="0 0 16 14"><rect x=".5" y=".5" width="15" height="13" fill="#a9aeb8" stroke="#7a8290"/><path d="M3 4l3 3-3 3M8 10h4" stroke="#333" fill="none"/></svg><i class="caret tiny dark"></i>
      <input aria-label="命令" value="'_dimstyle"><i class="caret dark up"></i>
    </div>
  </div>
  <div class="edge"><span></span></div>
</main>

<footer class="status">
  <nav class="layouts"><a class="on" href="#">模型</a><a href="#">布局1</a><a href="#">布局2</a><a class="plus" href="#">+</a></nav>
  <div class="cells">
    <output class="cell coord">14.3269, 17.7464, 0.0000</output>
    <button class="cell model">模型</button>
    <div class="cell c64">
      <svg viewBox="0 0 16 16"><path d="M3 1v14M6 1v14M10 1v14M13 1v14M1 3h14M1 6h14M1 10h14M1 13h14" stroke="#2a8cff"/></svg>
      <svg viewBox="0 0 16 16"><path d="M1 2h15M1 5h15M1 8h15M1 11h15M1 14h15" stroke="#ccc" stroke-dasharray="1 2"/></svg><i class="caret"></i></div>
    <div class="cell c103">
      <svg viewBox="0 0 16 16"><path d="M2 2v12h13M2 10h4v4" fill="none" stroke="#ddd"/></svg>
      <svg viewBox="0 0 16 16"><path d="M13 4a6.500 6.500 0 1 0 1 5M8 8h8M8 8l6-7" fill="none" stroke="#2a8cff" stroke-width="1.500"/></svg><i class="caret"></i>
      <svg viewBox="0 0 16 16"><path d="M1 1l14 14M8 0v6M8 9v7" stroke="#aaa" stroke-width="1.500"/></svg><i class="caret"></i></div>
    <div class="cell c65">
      <svg viewBox="0 0 16 16"><path d="M12 2L2 14h14M4 8l4 3" fill="none" stroke="#2a8cff" stroke-width="2"/></svg>
      <svg viewBox="0 0 16 16"><path d="M3 3h12v12H3z" fill="none" stroke="#2a8cff" stroke-width="1.500"/><path d="M0 0h6v6H0z" fill="#063"/><path d="M1 1h4v4H1z" fill="#0f3"/></svg><i class="caret"></i></div>
    <div class="cell c111">
      <svg viewBox="0 0 16 16"><path d="M6 1l3 7 6 7-6-3-2 3-1-3-5 3 4-7z" fill="#2a8cff"/><circle cx="12" cy="4" r="3" fill="none" stroke="#2a8cff" stroke-width="1.500"/></svg>
      <svg viewBox="0 0 16 16"><path d="M7 1l2 7 6 7-6-3-1 3-2-3-5 3 5-7z" fill="#ccc"/><path d="M13 1l-2 4h3l-3 4" fill="none" stroke="#ccc"/></svg>
      <svg viewBox="0 0 16 16"><path d="M8 0l2 8 5 7-6-3-1 3-1-3-6 3 5-7z" fill="#ccc"/></svg>
      <span>1:1</span><i class="caret"></i></div>
    <div class="cell c40"><svg class="small"><use href="#i-gear"/></svg><i class="caret"></i></div>
    <div class="cell c26"><svg viewBox="0 0 16 16"><path d="M8 1v14M1 8h14" stroke="#ccc" stroke-width="2"/></svg></div>
    <div class="cell c26"><svg viewBox="0 0 16 16"><path d="M1 1h6v6H1zM5 14l3-5 3 5z" fill="none" stroke="#ccc"/><circle cx="12" cy="7" r="3" fill="none" stroke="#ccc"/></svg></div>
    <div class="cell c26"><svg viewBox="0 0 16 16"><circle cx="8" cy="8" r="7.500" fill="#0059b3" stroke="#2a8cff"/><path d="M8 11l4-4" stroke="#2a8cff" stroke-width="2"/></svg></div>
    <div class="cell c49"><svg viewBox="0 0 16 16"><path d="M1 2h14v12H1z" fill="none" stroke="#ddd" stroke-width="1.500"/><path d="M9 4h4v4zM3 8v4h4z" fill="#ddd"/></svg><svg viewBox="0 0 16 16"><path d="M1 3h14M1 8h14M1 13h14" stroke="#ccc" stroke-width="2"/></svg></div>
  </div>
</footer>
<div class="taskedge"></div>
<div class="watermark">最需教育</div>
</body>
</html>
```
FILE: styles.css
```css
* { box-sizing: border-box; }
html, body { height: 100%; }
body {
  margin: 0; display: flex; flex-direction: column; position: relative; overflow: hidden;
  background: #383838; color: #fff; font: 12px/16px "Noto Sans", "Noto Sans CJK SC", sans-serif;
}
button, input, select { font: inherit; color: inherit; margin: 0; padding: 0; border: 0; background: none; border-radius: 0; }
select { appearance: none; }
a { color: inherit; text-decoration: none; }
p, ul, h2 { margin: 0; padding: 0; }
svg { width: 16px; height: 16px; flex: none; display: block; }
.defs { position: absolute; width: 0; height: 0; }
.caret { flex: none; width: 0; height: 0; border: 4px solid transparent; border-top: 5px solid #f0f0f0; border-bottom: 0; }
.caret.tiny { border-width: 3px; border-top-width: 4px; border-bottom: 0; }
.caret.dim { border-top-color: #aaa; }
.caret.dark { border-top-color: #444; }
.caret.up { border-bottom: 5px solid #222; border-top: 0; }

/* title bar */
.titlebar {
  height: 24px; flex: none; display: flex; justify-content: space-between; color: #222;
  background:
    radial-gradient(40px 7px at 475px 18px, #aecbe8, transparent),
    radial-gradient(40px 7px at 620px 18px, #a6c2e2, transparent),
    radial-gradient(44px 7px at 705px 18px, #98b6dc, transparent),
    radial-gradient(34px 6px at 840px 18px, #b4c8e8, transparent),
    radial-gradient(52px 6px at 920px 18px, #b0c4e8, transparent),
    radial-gradient(10px 7px at 1034px 18px, #b8cdf2, transparent),
    radial-gradient(8px 8px at 1738px 18px, #a9c6ee, transparent),
    radial-gradient(10px 8px at 1777px 17px, #a3bde6, transparent),
    linear-gradient(90deg, #d8f4f6 0, #d4f6f8 40%, #fff 42%, #f4ffff 50%, #dff8f8 55%, #e6fefe 72%, #dcf6f6 80%, #e6ffff 100%);
  border-bottom: 1px solid #888;
}
.quick { display: flex; align-items: center; width: 435px; padding-left: 46px; background: linear-gradient(#6a6a6a, #7c7c7c 60%, #666); }
.ico { width: 24px; display: flex; justify-content: center; }
.redo { transform: scaleX(-1); opacity: .45; margin-left: 7px; }
.workspace { flex: 1; display: flex; align-items: center; height: 21px; margin-left: 4px; padding: 0 4px; background: #555; border: 1px solid #333; color: #fff; }
.workspace select { flex: 1; padding-left: 4px; }
.more { width: 17px; display: flex; flex-direction: column; align-items: center; gap: 2px; }
.more::before { content: ""; width: 8px; height: 2px; background: #f0f0f0; }
.caption { display: flex; gap: 16px; line-height: 24px; margin-right: 18px; }
.winctl { display: flex; width: 102px; height: 18px; margin-right: 4px; border: 1px solid #9ab; border-top: 0; border-radius: 0 0 5px 5px; }
.winctl button { flex: 1; display: flex; justify-content: center; align-items: center; border-left: 1px solid #abc; }
.winctl button:first-child { border: 0; }
.winctl button:last-child { flex: 2; }
.winctl svg { width: 14px; height: 14px; }
.appmenu { position: absolute; left: 0; top: 0; width: 41px; height: 41px; display: flex; align-items: center; justify-content: space-between; padding: 0 2px 6px 4px; background: linear-gradient(#777, #999 40%, #666); border: 1px solid #111; z-index: 2; }
.appmenu .big { width: 26px; height: 28px; }
.appmenu .caret { border-top-color: #222; }

/* menus and ribbon tabs */
.menubar { height: 22px; flex: none; display: flex; align-items: center; gap: 25px; padding: 0 4px 0 55px; background: linear-gradient(#a6a6a6, #787878 50%, #555); border-bottom: 1px solid #2e2e2e; border-top: 1px solid #333; }
.docctl { margin-left: auto; display: flex; gap: 5px; }
.docctl svg { width: 12px; height: 12px; }
.tabs { height: 20px; flex: none; display: flex; align-items: center; gap: 20px; padding: 1px 4px 0; background: #525252; border-bottom: 1px solid #2e2e2e; color: #ddd; line-height: 18px; }
.tabs .on { height: 18px; margin-right: -10px; padding: 0 9px; background: #5e5e5e; border: 1px solid #2e2e2e; border-bottom: 0; color: #fff; }
.pill { margin-left: 11px; }
.pill svg { width: 14px; height: 9px; }
.pill + .caret { margin-left: -14px; }

/* ribbon */
.ribbon { height: 99px; flex: none; display: flex; gap: 1px; padding-left: 2px; background: linear-gradient(#505050, #363636); border-bottom: 1px solid #8a8a8a; }
.panel { position: relative; display: flex; flex-direction: column; background: #5d5d5d; border-right: 1px solid #3f3f3f; color: #7d7d7d; }
.panel .body { flex: 1; display: flex; }
.panel h2 { height: 19px; display: flex; align-items: center; justify-content: center; gap: 7px; background: #494949; color: #fff; font-size: 12px; font-weight: 400; line-height: 19px; }
.p-draw { width: 210px; } .p-modify { width: 226px; } .p-anno { width: 155px; } .p-layer { width: 251px; }
.p-block { width: 133px; } .p-props { width: 243px; } .p-group { width: 67px; } .p-util { width: 75px; }
.bigbtn { display: flex; flex-direction: column; align-items: center; align-self: flex-start; padding-top: 8px; white-space: nowrap; }
.bigbtn svg { width: 29px; height: 30px; margin-bottom: 4px; }
.bigbtn .caret { margin-top: 3px; }
.w41 { width: 41px; } .w44 { width: 44px; } .w46 { width: 46px; } .w60 { width: 59px; } .w73 { width: 74px; }
.col { display: flex; flex-direction: column; padding: 4px 0 0 7px; }
.tight { padding-left: 5px; }
.row { height: 24px; display: flex; align-items: center; gap: 5px; padding: 0; white-space: nowrap; }
.p-draw .col { padding-left: 3px; }
.p-draw .row { gap: 7px; }
.far { margin-left: 5px; }
.lit svg { background: #6f88b3; box-shadow: 0 0 0 3px #6f88b3, 0 0 0 4px #3d4d6c; }
.stack { flex: 1; padding: 4px 2px 0 0; }
.combo { display: flex; align-items: center; height: 21px; padding: 0 4px; background: linear-gradient(#6e6e6e, #5c5c5c); border: 1px solid #404040; color: #a3a3a3; }
.combo select { flex: 1; min-width: 0; }
.layer { gap: 4px; margin: 2px 0 2px; padding-left: 2px; }
.swatch { width: 14px; height: 16px; background: #b5b5b5; border: 1px solid #333; }
.layer select { padding-left: 2px; }
.icons { display: flex; align-items: center; gap: 8px; padding-left: 4px; height: 24px; }
.prop { display: flex; align-items: center; gap: 2px; height: 24px; }
.prop .combo { flex: 1; padding-left: 8px; }
.faint { color: #7d7d7d; }
.faint .swatch { border-color: #777; margin: 0 10px 0 4px; }
.faint .caret { border-top-color: #999; }
.rule { width: 59px; height: 1px; background: #fff; margin-right: 2px; }
.launch { position: absolute; right: 3px; bottom: 3px; width: 8px; height: 8px; }

/* drawing file tabs */
.files { height: 29px; flex: none; display: flex; align-items: flex-end; padding-left: 16px; background: #383838; border-bottom: 4px solid #5c5c5c; }
.file { position: relative; width: 134px; height: 22px; display: flex; justify-content: space-between; align-items: center; padding: 0 16px; color: #eee; }
.file .shape { position: absolute; left: 0; top: 0; width: 140px; height: 22px; }
.file span, .file b { position: relative; }
.file b { color: #444; font-size: 14px; }
.add svg { width: 24px; height: 18px; margin-bottom: 3px; }

/* work area */
.work { flex: 1; display: flex; min-height: 0; }
.canvas { position: relative; flex: 1; background: #212830; }
.grid { position: absolute; inset: 0; width: 100%; height: 100%; }
.edge { position: relative; width: 8px; background: linear-gradient(90deg, #bdd2ee 6px, #2cc6ee 6px); }
.edge span { position: absolute; left: -3px; top: 52px; width: 9px; height: 58px; background: linear-gradient(#333c44 48px, #3c4 48px, #333c44 50px, #3c4 51px, #333c44 53px); border: 1px solid #ddd; border-radius: 4px; }
.view { position: absolute; left: 4px; top: 6px; }
.dims { position: absolute; left: 0; top: 0; width: 920px; height: 480px; font-family: "Liberation Sans", sans-serif; }
.ucs { position: absolute; left: 12px; bottom: 6px; width: 90px; height: 90px; }
.compass { position: absolute; right: 23px; top: 22px; width: 120px; height: 120px; border: 13px solid #454b54; border-radius: 50%; color: #a9a9a9; font: 18px/20px "Liberation Serif", "Noto Sans CJK SC", serif; }
.compass span { position: absolute; }
.n { left: 38px; top: -18px; } .s { left: 38px; top: 96px; } .w { left: -19px; top: 38px; } .e { left: 94px; top: 38px; }
.top { position: absolute; left: 21px; top: 21px; width: 52px; height: 52px; background: #9fa4a8; border: 9px solid #acadae; color: #5a5f66; font-size: 28px; line-height: 32px; }
.wcs { position: absolute; right: 59px; top: 169px; width: 48px; height: 18px; display: flex; align-items: center; justify-content: space-around; background: #9394a0; border: 1px solid #a5a6b0; border-radius: 4px; color: #555; font: 10px "Liberation Sans", sans-serif; }
.wcs svg { width: 10px; height: 6px; }
.navbar { position: absolute; right: 4px; top: 212px; width: 32px; height: 212px; }
.mark { position: absolute; border: 3px solid #ff2214; border-radius: 2px; }
.mark-a { left: 143px; top: 162px; width: 535px; height: 382px; z-index: 3; pointer-events: none; }
.mark-b { left: 894px; top: 82px; width: 608px; height: 529px; }
.arrow { position: absolute; left: 672px; top: 328px; width: 220px; height: 20px; z-index: 4; }

/* dialogs */
.dialog { position: absolute; display: flex; flex-direction: column; padding: 0 5px 5px; border: 1px solid #a9b3bb; border-radius: 6px; box-shadow: 0 0 2px #000; color: #000; font: 12px/16px "Liberation Sans", "Noto Sans CJK SC", sans-serif; }
.manager { left: 147px; top: 167px; width: 533px; height: 377px; background: linear-gradient(100deg, #59626c, #47535f 25%, #26333f 50%, #3a4753 66%, #2b3844 80%, #52606c); }
.override { left: 907px; top: 105px; width: 578px; height: 489px; background: linear-gradient(90deg, #68717a, #3a4856 35%, #2a3846 70%, #87909a 86%, #56626e); }
.bar { height: 28px; flex: none; display: flex; align-items: center; gap: 5px; padding-left: 1px; padding-bottom: 2px; }
.appicon { width: 16px; height: 16px; background: #f2e4e2; }
.appicon svg { width: 14px; height: 15px; margin: 1px; }
.glow { padding: 0 5px; margin-left: -5px; background: radial-gradient(closest-side, #aab4bc, #aab4bc00); text-shadow: 0 0 6px #c8d0d6, 0 0 10px #c8d0d6; }
.close { align-self: flex-start; margin-left: auto; width: 48px; height: 19px; display: flex; align-items: center; justify-content: center; border: 1px solid #8a959e; border-top: 0; border-radius: 0 0 5px 5px; }
.close svg { width: 10px; height: 9px; }
.hot { background: linear-gradient(#d9938a, #b9402f 50%, #a02010 51%, #d06040); border-color: #d8b8b4; }
.client { flex: 1; display: flex; flex-direction: column; background: #f0f0f0; border: 1px solid #1c242c; outline: 1px solid #b6bec5; }
.en { font: 10px/12px "Liberation Mono", monospace; white-space: pre; }
.ln { display: block; line-height: 16px; }
.client button { color: #000; white-space: nowrap; }
.btns button, .foot button { height: 19px; border: 1px solid #707070; border-radius: 3px; background: linear-gradient(#f2f2f2, #ebebeb 50%, #ddd 51%, #cfcfcf); line-height: 15px; box-shadow: inset 0 0 0 1px #fff; }
.foot { display: flex; justify-content: flex-end; }
.foot button { width: 73px; }

.mgr { display: grid; grid-template-columns: 168px 223px 75px; column-gap: 16px; padding: 11px 0 0 12px; }
.mgr .btns { display: flex; flex-direction: column; gap: 10px; padding-top: 38px; margin: 0 2px 0 -2px; }
.btns button { width: 75px; }
.cur { height: 18px; }
.styles { height: 182px; margin-top: 4px; padding: 2px 3px; background: #fff; border: 1px solid #828790; list-style: none; }
.styles li { display: flex; align-items: center; gap: 6px; height: 16px; padding-left: 2px; }
.styles svg { width: 12px; height: 12px; }
.sel { background: #f0f0f0; line-height: 16px; padding: 0 1px; }
.list { margin-top: 4px; height: 18px; }
.dd { position: relative; height: 21px; border: 1px solid #707070; border-radius: 3px; background: linear-gradient(#f2f2f2, #ebebeb 50%, #ddd 51%, #cfcfcf); }
.dd select { width: 100%; height: 100%; padding-left: 4px; display: block; }
.dd::after { content: ""; position: absolute; right: 3px; top: 8px; border: 4px solid transparent; border-top: 5px solid #000; border-bottom: 0; pointer-events: none; }
.ck { display: flex; align-items: center; gap: 3px; white-space: pre; }
.ck input { position: relative; appearance: none; width: 13px; height: 13px; flex: none; border: 1px solid #8e8f8f; background: linear-gradient(135deg, #d5d8dc, #f6f6f6); box-shadow: inset 0 0 0 1px #f4f4f4; }
.ck.off { margin-top: 7px; color: #838383; gap: 2px; }
.ck.off input { border-color: #b1b1b1; }
.ck input:checked::after { content: ""; position: absolute; left: 4px; top: 1px; width: 4px; height: 7px; border: solid #a0a0a0; border-width: 0 2px 2px 0; transform: rotate(40deg); }
.mid { padding: 17px 0 0 2px; }
.preview { background: #212830; border: 1px solid #888; border-width: 2px 1px 1px 2px; border-color: #888 #fff #fff #888; font: bold 11px "Liberation Sans", sans-serif; overflow: hidden; }
.dimtext { fill: #fff; text-anchor: middle; }
.pv-a { width: 221px; height: 181px; margin-top: 5px; }
.desc { margin: 3px 0 0; height: 62px; border: 1px solid #d5dfe5; border-radius: 3px; padding: 1px 9px; min-width: 0; }
legend { padding: 0 3px; line-height: 14px; margin-left: -3px; }
.btns .ring { outline: 3px solid #ff2214; outline-offset: 2px; }
.manager .foot { gap: 12px; padding: 9px 10px 0 0; }

.ptabs { display: flex; align-items: flex-end; height: 30px; padding-left: 6px; }
.ptabs button { height: 17px; padding: 0 0 0 4px; text-align: left; line-height: 15px; border: 1px solid #8c8e94; border-bottom: 0; border-left-width: 0; background: linear-gradient(#f2f2f2, #ddd); }
.ptabs .on { height: 21px; margin-bottom: -1px; position: relative; z-index: 1; background: #fff; border-left-width: 1px; padding-bottom: 4px; }
.t51 { width: 51px; } .t69 { width: 69px; } .t48 { width: 48px; } .t58 { width: 58px; } .t46 { width: 46px; }
.page { height: 384px; margin: 0 8px 0 6px; padding: 4px 3px 0; background: #fff; border: 1px solid #8c8e94; }
.upper { display: flex; gap: 7px; }
.grp { margin: 0; border: 1px solid #d5dfe5; border-radius: 3px; padding: 1px 5px 0 6px; min-width: 0; }
.dimline { width: 278px; height: 182px; }
.pv-b { width: 257px; height: 157px; margin-top: 3px; }
.ext { width: 533px; height: 149px; padding-top: 0; }
.two { display: flex; gap: 16px; }
.rows { display: grid; align-items: center; grid-template-columns: 130px 134px; }
.rows label { white-space: nowrap; }
.r1 { grid-template-rows: 26px 26px 28px 28px 28px 30px; }
.r2 { grid-template-rows: 21px 27px 27px 27px 28px; }
.r3 { grid-template-columns: 163px 71px; grid-template-rows: 24px 42px 26px 24px; align-content: start; }
.color select { padding-left: 18px; }
.color::before { content: ""; position: absolute; left: 4px; top: 4px; width: 10px; height: 10px; border: 1px solid #000; background: #fff; }
.dd.focus select { outline: 1px dotted #000; outline-offset: -1px; width: 109px; height: 17px; margin: 1px 2px; padding-left: 16px; }
.line select { padding-left: 53px; }
.line::before { content: ""; position: absolute; left: 8px; top: 9px; width: 37px; height: 1px; background: #000; }
.spin { display: flex; width: 71px; height: 21px; justify-self: end; border: 1px solid #c6c9d0; border-top-color: #999; background: #fff; }
.spin input { flex: 1; min-width: 0; padding-left: 2px; }
.spin div { display: grid; grid-template-rows: 1fr 1fr; width: 16px; }
.spin button { position: relative; border: 1px solid #aaa; background: #f0f0f0; }
.spin button::after { content: ""; position: absolute; left: 4px; top: 2px; border: 3px solid transparent; border-top: 0; border-bottom: 4px solid #4a64b8; }
.spin button + button::after { border-top: 4px solid #4a64b8; border-bottom: 0; }
.spin.off { color: #838383; }
.spin.off button::after { border-bottom-color: #999; }
.spin.off button + button::after { border-top-color: #999; }
.hide { grid-column: 1 / 3; display: grid; grid-template-columns: 66px 109px 1fr; align-items: center; }
.wide { grid-column: 1 / 3; }
.indent { padding-left: 42px; }
.override .foot { gap: 23px; padding: 9px 7px 0 0; }
.foot .ok { border-color: #3c7fb1; background: linear-gradient(#eaf6fd, #d9f0fc 50%, #bee6fd 51%, #a7d9f5); box-shadow: inset 0 0 0 1px #3bc9f5; }

/* command line */
.cmd { position: absolute; left: 390px; right: 383px; bottom: 1px; height: 26px; display: flex; align-items: center; padding-right: 4px; background: #bfc0c2; border: 1px solid #777; color: #111; }
.handle { align-self: stretch; width: 53px; display: flex; align-items: center; gap: 6px; padding-left: 3px; margin-right: 5px; background: linear-gradient(#6a6a6a, #444); }
.grip { width: 6px; height: 18px; }
.handle button svg { width: 13px; height: 13px; }
.prompt { width: 16px; height: 14px; margin-right: 2px; }
.cmd input { flex: 1; padding-left: 2px; font: 12px "DejaVu Sans Mono", monospace; }

/* status bar */
.status { height: 28px; flex: none; display: flex; justify-content: space-between; background: #383838; border-top: 1px solid #5c5c5c; border-bottom: 1px solid #000; }
.layouts { display: flex; gap: 2px; padding-left: 11px; height: 18px; line-height: 18px; color: #bbb; text-align: center; }
.layouts a { width: 52px; background: #4e4e4e; border-radius: 2px 2px 10px 10px; }
.layouts .on { width: 47px; background: linear-gradient(#555, #8a8a8a); color: #fff; font-weight: 700; }
.layouts .plus { width: 24px; color: #ddd; font-weight: 700; font-size: 14px; }
.cells { display: flex; gap: 1px; }
.cell { display: flex; align-items: center; justify-content: space-around; border: 1px solid #7c7c7c; background: #464646; white-space: nowrap; }
.coord { width: 153px; }
.model { width: 30px; }
.c64 { width: 64px; } .c103 { width: 103px; } .c65 { width: 65px; } .c111 { width: 111px; } .c40 { width: 40px; } .c26 { width: 26px; } .c49 { width: 49px; }
.small { width: 13px; height: 13px; color: #bbb; }
.taskedge { height: 2px; flex: none; background: linear-gradient(90deg, #777b80 246px, #eee 247px, #eee 1049px, #777b80 1050px); }
.watermark { position: absolute; right: 4px; bottom: 21px; font: 700 37px/40px "Noto Sans CJK SC", sans-serif; color: #7d7d7d; z-index: 5; }
```
